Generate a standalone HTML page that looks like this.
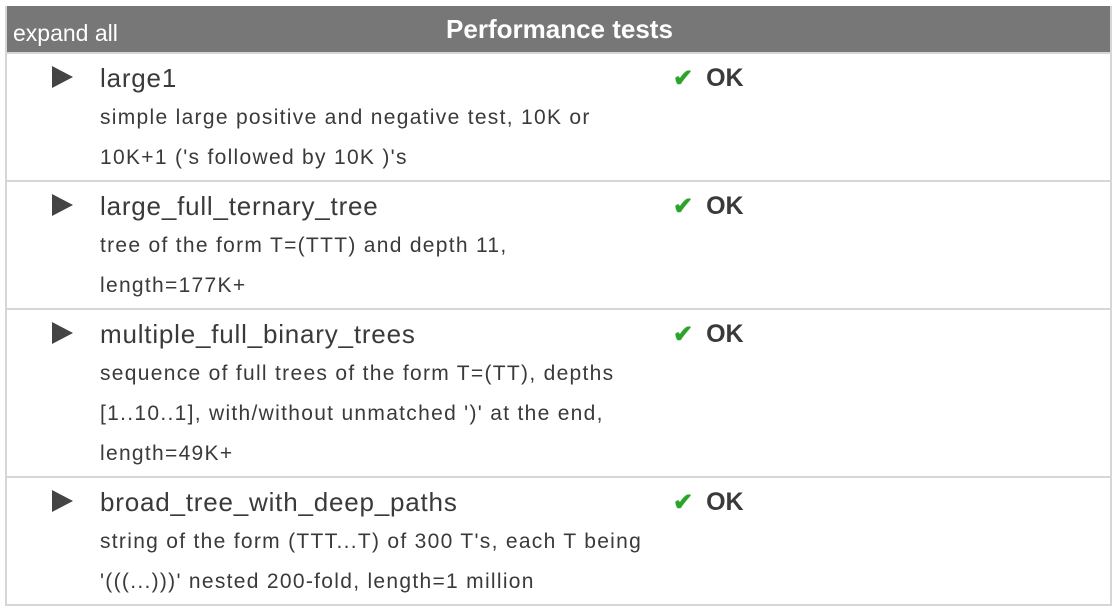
<!DOCTYPE html>
<html><head><meta charset="utf-8"><style>
body{margin:0;background:#fff;font-family:"Liberation Sans",sans-serif;color:#3a3a3a;}
.wrap{position:absolute;left:5px;top:6px;width:1103px;border-left:2px solid #d6d6d6;border-right:2px solid #d6d6d6;}
.hdr{height:46px;background:#777;position:relative;color:#fff;border-bottom:2px solid #d6d6d6;}
.hdr .ex{position:absolute;left:6px;top:14px;font-size:23px;letter-spacing:0px;}
.hdr .t{position:absolute;left:0;right:0;top:8px;text-align:center;font-weight:bold;font-size:26px;padding-left:2px;}
.row{position:relative;padding:4px 0 2px;border-bottom:2px solid #d6d6d6;}
.row .tri{position:absolute;left:45px;top:12px;width:0;height:0;border-left:21px solid #444;border-top:11px solid transparent;border-bottom:11px solid transparent;}
.row .name{margin-left:93px;height:40px;line-height:40px;font-size:26px;letter-spacing:0.8px;white-space:nowrap;}
.row .d{margin-left:93px;width:620px;line-height:40px;font-size:21px;letter-spacing:1.3px;white-space:nowrap;}
.row .ok{position:absolute;left:666px;top:4px;line-height:40px;font-size:25px;font-weight:bold;}
.row .ok span{color:#2aa52a;font-size:24px;margin-right:13px;}
</style></head><body>
<div class="wrap">
<div class="hdr"><div class="ex">expand all</div><div class="t">Performance tests</div></div>
<div class="row"><div class="tri"></div><div class="name">large1</div><div class="d">simple large positive and negative test, 10K or<br>10K+1 ('s followed by 10K )'s</div><div class="ok"><span>✔</span>OK</div></div>
<div class="row"><div class="tri"></div><div class="name">large_full_ternary_tree</div><div class="d">tree of the form T=(TTT) and depth 11,<br>length=177K+</div><div class="ok"><span>✔</span>OK</div></div>
<div class="row"><div class="tri"></div><div class="name">multiple_full_binary_trees</div><div class="d">sequence of full trees of the form T=(TT), depths<br>[1..10..1], with/without unmatched ')' at the end,<br>length=49K+</div><div class="ok"><span>✔</span>OK</div></div>
<div class="row"><div class="tri"></div><div class="name">broad_tree_with_deep_paths</div><div class="d">string of the form (TTT...T) of 300 T's, each T being<br>'(((...)))' nested 200-fold, length=1 million</div><div class="ok"><span>✔</span>OK</div></div>
</div>
</body></html>
